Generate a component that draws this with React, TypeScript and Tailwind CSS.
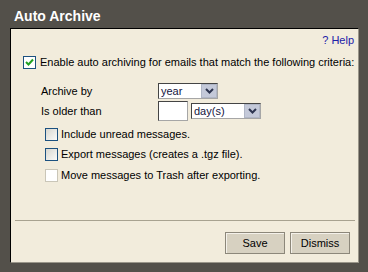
import React from "react";

const font = { fontFamily: '"Liberation Sans", Arial, sans-serif' };

function Check({ checked, disabled }: { checked?: boolean; disabled?: boolean }) {
  if (disabled) {
    return <div className="w-[13px] h-[13px] shrink-0 border border-[#cac6b8] bg-white" />;
  }
  return (
    <div
      className={
        "w-[13px] h-[13px] shrink-0 border border-[#1c5180] flex items-center justify-center " +
        (checked ? "bg-white" : "bg-gradient-to-br from-[#d8d7d0] to-[#fbfbf9]")
      }
    >
      {checked && (
        <svg width="9" height="9" viewBox="0 0 9 9">
          <path d="M1 4 L3.5 6.5 L8 1.5" stroke="#21a121" strokeWidth="2" fill="none" />
        </svg>
      )}
    </div>
  );
}

function Arrow() {
  return (
    <div className="w-[16px] h-full shrink-0 bg-[#c4c9d9] border border-[#b0b6c6] flex items-center justify-center">
      <svg width="9" height="6" viewBox="0 0 9 6">
        <path d="M1 1 L4.5 4.5 L8 1" stroke="#2d3550" strokeWidth="2" fill="none" />
      </svg>
    </div>
  );
}

export default function App() {
  return (
    <div className="w-[368px] h-[272px] bg-[#53504a] text-[11px] text-black" style={font}>
      <div className="h-[28px] pt-[8px] pl-[14px] text-white font-bold text-[14px] leading-[16px]">
        Auto Archive
      </div>
      <div className="ml-[10px] w-[349px] h-[235px] bg-[#f2ecdc] border-l border-t border-black border-r border-b border-r-[#9a968a] border-b-[#9a968a] flex flex-col">
        <div className="mt-[4px] h-[14px] leading-[14px] text-right pr-[4px] text-[#2020a8]">? Help</div>
        <div className="mt-[9px] h-[13px] flex items-center pl-[12px] gap-[4px]">
          <Check checked />
          <span className="leading-[13px] whitespace-nowrap">
            Enable auto archiving for emails that match the following criteria:
          </span>
        </div>
        <div className="mt-[14px] h-[16px] flex items-center pl-[30px]">
          <span className="w-[117px]">Archive by</span>
          <div className="w-[60px] h-[16px] flex bg-white border border-[#a6a6a6] border-t-[#444] border-l-[#444]">
            <span className="flex-1 pl-[2px] leading-[14px] text-[#141440]">year</span>
            <Arrow />
          </div>
        </div>
        <div className="mt-[2px] h-[20px] flex items-center pl-[30px]">
          <span className="w-[117px]">Is older than</span>
          <div className="w-[30px] h-[20px] bg-white border border-[#a6a6a6] border-t-[#444] border-l-[#444]" />
          <div className="ml-[3px] w-[70px] h-[16px] flex bg-white border border-[#a6a6a6] border-t-[#444] border-l-[#444]">
            <span className="flex-1 pl-[2px] leading-[14px] text-[#141440]">day(s)</span>
            <Arrow />
          </div>
        </div>
        <div className="mt-[7px] h-[13px] flex items-center pl-[34px] gap-[3px]">
          <Check />
          <span className="leading-[13px]">Include unread messages.</span>
        </div>
        <div className="mt-[7px] h-[13px] flex items-center pl-[34px] gap-[3px]">
          <Check />
          <span className="leading-[13px]">Export messages (creates a .tgz file).</span>
        </div>
        <div className="mt-[8px] h-[13px] flex items-center pl-[34px] gap-[3px]">
          <Check disabled />
          <span className="leading-[13px]">Move messages to Trash after exporting.</span>
        </div>
        <div className="mt-[38px] ml-[4px] mr-[3px] h-px bg-[#a8a290]" />
        <div className="mt-[11px] flex justify-end gap-[5px] pr-[8px]">
          <button className="w-[60px] h-[22px] bg-[#d7d1c1] border border-[#8c877a] shadow-[inset_1px_1px_0_#f4f1ea] text-[11px] text-black">
            Save
          </button>
          <button className="w-[60px] h-[22px] bg-[#d7d1c1] border border-[#8c877a] shadow-[inset_1px_1px_0_#f4f1ea] text-[11px] text-black">
            Dismiss
          </button>
        </div>
      </div>
    </div>
  );
}
